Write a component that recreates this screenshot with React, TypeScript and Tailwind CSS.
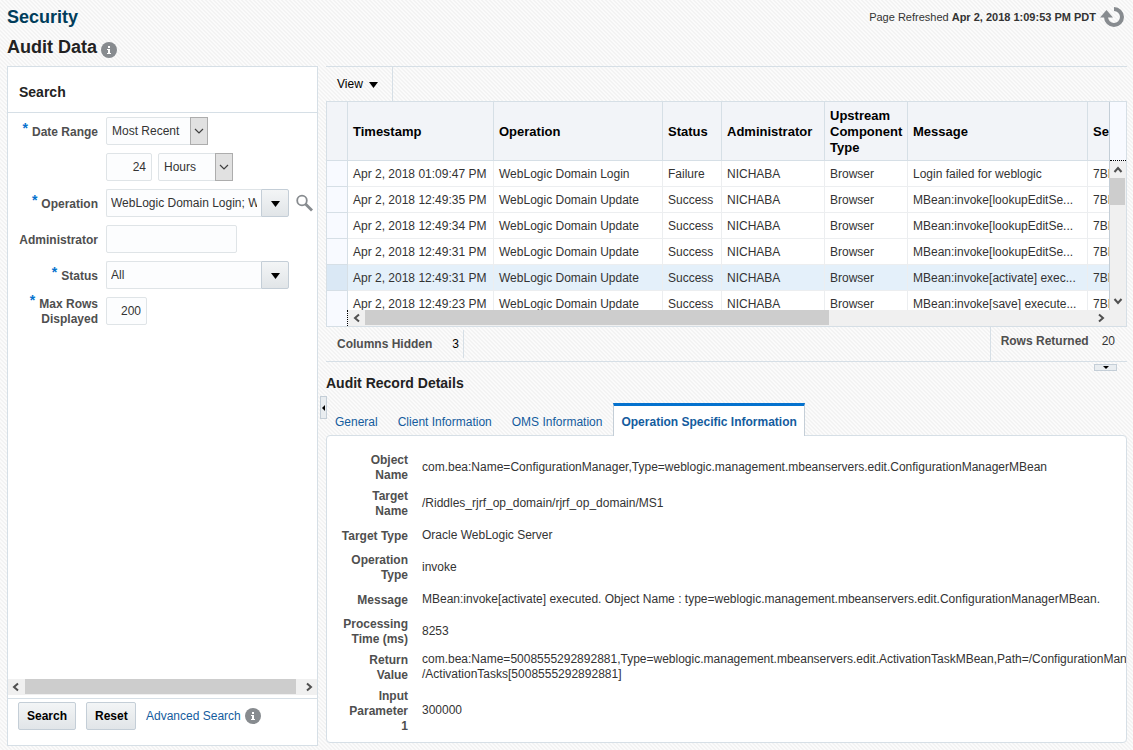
import React, { useState } from 'react';

const auditRows = [
  { time: 'Apr 2, 2018 01:09:47 PM', operation: 'WebLogic Domain Login', status: 'Failure', message: 'Login failed for weblogic' },
  { time: 'Apr 2, 2018 12:49:35 PM', operation: 'WebLogic Domain Update', status: 'Success', message: 'MBean:invoke[lookupEditSe...' },
  { time: 'Apr 2, 2018 12:49:34 PM', operation: 'WebLogic Domain Update', status: 'Success', message: 'MBean:invoke[lookupEditSe...' },
  { time: 'Apr 2, 2018 12:49:31 PM', operation: 'WebLogic Domain Update', status: 'Success', message: 'MBean:invoke[lookupEditSe...' },
  { time: 'Apr 2, 2018 12:49:31 PM', operation: 'WebLogic Domain Update', status: 'Success', message: 'MBean:invoke[activate] exec...' },
  { time: 'Apr 2, 2018 12:49:23 PM', operation: 'WebLogic Domain Update', status: 'Success', message: 'MBean:invoke[save] execute...' },
];

const columns = ['Timestamp', 'Operation', 'Status', 'Administrator', 'Upstream Component Type', 'Message', 'Session'];

const tabs = ['General', 'Client Information', 'OMS Information', 'Operation Specific Information'];

const details = [
  ['Object Name', 'com.bea:Name=ConfigurationManager,Type=weblogic.management.mbeanservers.edit.ConfigurationManagerMBean'],
  ['Target Name', '/Riddles_rjrf_op_domain/rjrf_op_domain/MS1'],
  ['Target Type', 'Oracle WebLogic Server'],
  ['Operation Type', 'invoke'],
  ['Message', 'MBean:invoke[activate] executed. Object Name : type=weblogic.management.mbeanservers.edit.ConfigurationManagerMBean.'],
  ['Processing Time (ms)', '8253'],
  ['Return Value', 'com.bea:Name=5008555292892881,Type=weblogic.management.mbeanservers.edit.ActivationTaskMBean,Path=/ConfigurationManager\n/ActivationTasks[5008555292892881]'],
  ['Input Parameter 1', '300000'],
];

const InfoIcon = () => (
  <svg width="16" height="16" viewBox="0 0 16 16" aria-hidden="true">
    <circle cx="8" cy="8" r="8" fill="#878b8f" />
    <path d="M7 4h2v2H7zM6 7h3v4h1v1H6v-1h1V8H6z" fill="#fff" />
  </svg>
);

const RefreshIcon = () => (
  <svg width="24" height="22" viewBox="0 0 24 22" aria-hidden="true">
    <path d="M14 3a8 8 0 1 1-8 8" fill="none" stroke="#878b8f" strokeWidth="4" />
    <path d="M0 11.5L6.5 4l6.5 7.5z" fill="#878b8f" />
  </svg>
);

const SearchIcon = () => (
  <svg width="18" height="18" viewBox="0 0 18 18" fill="none" aria-hidden="true">
    <circle cx="6" cy="6.5" r="4.8" stroke="#878b8f" strokeWidth="1.8" />
    <path d="M9.5 10l6.5 6.5" stroke="#878b8f" strokeWidth="2.8" />
  </svg>
);

const Chevron = ({ d }: { d: string }) => (
  <svg width="10" height="10" viewBox="0 0 10 10" fill="none" className="shrink-0" aria-hidden="true">
    <path d={d} stroke="#505050" strokeWidth="2" />
  </svg>
);

const LEFT = 'M7 1.5L3 5l4 3.5';
const RIGHT = 'M3 1.5L7 5 3 8.5';
const UP = 'M1.5 7L5 3l3.5 4';
const DOWN = 'M1.5 3L5 7l3.5-4';

const Triangle = () => (
  <svg width="9" height="6" viewBox="0 0 9 6" className="mt-0.5" aria-hidden="true">
    <path d="M0 0h9L4.5 6z" fill="#000" />
  </svg>
);

const Label = ({ id, required, children }: { id: string; required?: boolean; children: React.ReactNode }) => (
  <label htmlFor={id} className="-my-1 flex justify-end pt-0.5 text-right font-bold whitespace-nowrap text-[#4f4f4f]">
    {required && <span className="-mt-1 mr-1 text-sm leading-[15px] text-[#0572ce]">*</span>}
    <span>{children}</span>
  </label>
);

const field = 'h-7 rounded-xs border border-[#dfe4e7] bg-[#fcfdfe] text-[#333]';

const NativeSelect = ({ id, label, options, width }: { id: string; label?: string; options: string[]; width: string }) => (
  <div className={`relative ${width}`}>
    <select id={id} aria-label={label} className={`${field} w-full appearance-none pl-[5px]`}>
      {options.map((o) => <option key={o}>{o}</option>)}
    </select>
    <span className="pointer-events-none absolute inset-y-0 right-0 flex w-[18px] items-center justify-center border border-[#adadad] bg-[#e1e1e1]">
      <svg width="10" height="6" viewBox="0 0 10 6" fill="none" aria-hidden="true">
        <path d="M1 1l4 4 4-4" stroke="#404040" strokeWidth="1.2" />
      </svg>
    </span>
  </div>
);

const Combo = ({ id, value }: { id: string; value: string }) => (
  <div className="flex w-[183px]">
    <div className="flex h-7 min-w-0 flex-1 rounded-l-xs border border-r-0 border-[#dfe4e7] bg-[#fcfdfe] px-1">
      <input id={id} defaultValue={value} className="w-full min-w-0 text-[#333] outline-none" />
    </div>
    <button type="button" aria-label="Show choices" className="flex h-7 w-7 items-center justify-center rounded-r-xs border border-[#c4ced7] bg-linear-to-b from-[#f3f5f6] to-[#e1e5e8]">
      <Triangle />
    </button>
  </div>
);

const button = 'h-7 rounded-xs border border-[#c4ced7] bg-linear-to-b from-[#f3f5f6] to-[#e1e5e8] px-2 font-bold text-black';

const SearchPanel = () => (
  <form className="flex w-[311px] shrink-0 flex-col border border-[#d6dfe6] bg-white" onSubmit={(e) => e.preventDefault()}>
    <h2 className="border-b border-[#d6dfe6] px-[11px] pt-[15px] pb-[9px] text-sm leading-[21px] font-bold text-[#222]">Search</h2>

    <div className="grid grid-cols-[90px_1fr] items-center gap-2 pt-1">
      <Label id="range" required>Date Range</Label>
      <NativeSelect id="range" options={['Most Recent', 'Time Interval']} width="w-[102px]" />

      <div className="col-start-2 flex gap-[6px]">
        <input aria-label="Amount" defaultValue="24" className={`${field} w-[46px] pr-[5px] text-right`} />
        <NativeSelect id="unit" label="Unit" options={['Hours', 'Days']} width="w-[75px]" />
      </div>

      <Label id="operation" required>Operation</Label>
      <div className="flex items-center gap-[7px]">
        <Combo id="operation" value="WebLogic Domain Login; WebLogic Domain Update" />
        <button type="button" aria-label="Select operations"><SearchIcon /></button>
      </div>

      <Label id="admin">Administrator</Label>
      <input id="admin" className={`${field} w-[131px] px-1`} />

      <Label id="status" required>Status</Label>
      <Combo id="status" value="All" />

      <Label id="rows" required>Max Rows<br />Displayed</Label>
      <input id="rows" defaultValue="200" className={`${field} w-[41px] pr-[5px] text-right`} />
    </div>

    <div className="mt-auto flex h-4 items-center justify-between gap-1 bg-[#f0f0f0] px-[3px]">
      <Chevron d={LEFT} />
      <div className="mr-1 h-[15px] flex-1 self-start bg-[#cdcdcd]" />
      <Chevron d={RIGHT} />
    </div>

    <div className="mt-[3px] flex items-start border-t border-[#d6dfe6] px-[10px] pt-[3px] pb-[15px]">
      <button type="submit" className={`${button} mr-[10px] w-[58px]`}>Search</button>
      <button type="reset" className={`${button} mr-[10px] w-[50px]`}>Reset</button>
      <a href="#advanced" className="mr-1 leading-7 text-[#145c9e]">Advanced Search</a>
      <button type="button" aria-label="About advanced search" className="mt-[6px]"><InfoIcon /></button>
    </div>
  </form>
);

const AuditTable = () => {
  const [selected, setSelected] = useState(4);

  return (
    <div className="border border-[#d6dfe6] bg-white">
      <div className="flex h-[208px]">
        <div className="min-w-0 flex-1 overflow-hidden">
          <table className="w-[861px] table-fixed border-separate border-spacing-0 text-left">
            <colgroup>
              <col className="w-[21px]" />
              <col className="w-[146px]" />
              <col className="w-[169px]" />
              <col className="w-[59px]" />
              <col className="w-[103px]" />
              <col className="w-[83px]" />
              <col className="w-[180px]" />
              <col className="w-[100px]" />
            </colgroup>
            <thead>
              <tr className="h-[59px] bg-[#f2f4f8]">
                <td className="border-r border-b border-[#d6dfe6]" />
                {columns.map((c) => (
                  <th key={c} className="border-r border-b border-[#d6dfe6] pt-0.5 pl-[5px] text-[13px] leading-4 font-bold text-black">{c}</th>
                ))}
              </tr>
            </thead>
            <tbody>
              {auditRows.map((r, i) => (
                <tr key={i} onClick={() => setSelected(i)} className={i === selected ? 'h-[26px] bg-[#e4f0fa]' : 'h-[26px]'}>
                  <td className={`border-r border-b border-[#d6dfe6] ${i === selected ? 'bg-[#dae8f5]' : 'bg-[#f8faff]'}`} />
                  {[r.time, r.operation, r.status, 'NICHABA', 'Browser', r.message, '7BE04C'].map((cell, j) => (
                    <td key={j} className="border-r border-b border-[#eceef0] pt-0.5 pl-[5px] whitespace-nowrap">{cell}</td>
                  ))}
                </tr>
              ))}
            </tbody>
          </table>
        </div>
        <div className="flex w-[17px] flex-col border-l border-[#c4ced7] bg-[#f8faff]">
          <div className="h-[59px] border-b border-dotted border-black" />
          <div className="flex flex-1 flex-col items-center justify-between bg-[#f0f0f0] pt-1 pb-1">
            <Chevron d={UP} />
            <div className="mt-[3px] mb-auto h-[27px] w-[15px] self-start bg-[#cdcdcd]" />
            <Chevron d={DOWN} />
          </div>
        </div>
      </div>
      <div className="flex h-4 bg-[#f8faff]">
        <div className="w-[21px] border-r border-dotted border-black" />
        <div className="flex flex-1 items-center bg-[#f0f0f0] pl-1">
          <Chevron d={LEFT} />
          <div className="ml-[3px] h-[15px] w-3/5 self-start bg-[#cdcdcd]" />
          <div className="ml-auto pr-5"><Chevron d={RIGHT} /></div>
        </div>
      </div>
    </div>
  );
};

const AuditDetails = () => {
  const [active, setActive] = useState(3);

  return (
    <section className="pt-0.5">
      <h2 className="text-sm leading-5 font-bold text-[#222]">Audit Record Details</h2>
      <div role="tablist" className="mt-[10px] flex gap-0.5">
        {tabs.map((t, i) => (
          <button
            key={t}
            role="tab"
            aria-selected={i === active}
            onClick={() => setActive(i)}
            className={
              i === active
                ? 'relative -mb-px h-[33px] border-x border-t-3 border-x-[#c4ced7] border-t-[#0572ce] bg-white px-[7px] pt-0.5 font-bold text-[#145c9e]'
                : 'h-8 px-[9px] pt-[7px] text-[#145c9e]'
            }
          >
            {t}
          </button>
        ))}
      </div>
      <div className="overflow-hidden rounded-sm border border-[#d6dfe6] bg-white pt-[13px] pb-[6px] pl-[13px]">
        <table>
          <tbody>
            {details.map(([name, value]) => (
              <tr key={name} className="h-7">
                <th className="w-[68px] min-w-[68px] pt-1 pb-0.5 text-right font-bold text-[#4f4f4f]">{name}</th>
                <td className="pl-[14px] whitespace-pre">{value}</td>
              </tr>
            ))}
          </tbody>
        </table>
      </div>
    </section>
  );
};

export default function App() {
  return (
    <div className="flex min-h-screen flex-col bg-[#f9f9f9] bg-[linear-gradient(45deg,#f3f3f3_25%,#fbfbfb_25%,#fbfbfb_50%,#f3f3f3_50%,#f3f3f3_75%,#fbfbfb_75%)] bg-size-[4px_4px] pr-[6px] pb-1 pl-[7px] font-['Liberation_Sans',Arial,sans-serif] text-xs leading-[15px] text-[#333]">
      <header className="flex items-start justify-between pt-[6px]">
        <div className="text-lg font-bold">
          <h1 className="leading-[22px] text-[#003d5b]">Security</h1>
          <div className="mt-2 flex items-center gap-1 text-[#222]">
            <h2 className="leading-[22px]">Audit Data</h2>
            <button aria-label="About audit data" className="mt-[6px]"><InfoIcon /></button>
          </div>
        </div>
        <div className="flex items-center gap-1 pr-[3px] text-[11px]">
          <p>Page Refreshed <b>Apr 2, 2018 1:09:53 PM PDT</b></p>
          <button aria-label="Refresh page"><RefreshIcon /></button>
        </div>
      </header>

      <div className="mt-2 flex flex-1">
        <SearchPanel />

        <div className="flex w-2 shrink-0 items-start">
          <button aria-label="Collapse search" className="mt-[330px] ml-[2px] flex h-[23px] w-[7px] shrink-0 items-center justify-center border border-[#c4ced7] bg-[#e9edf0]">
            <svg width="3" height="6" viewBox="0 0 3 6" aria-hidden="true"><path d="M3 0v6L0 3z" fill="#000" /></svg>
          </button>
        </div>

        <main className="min-w-0 flex-1">
          <div className="border-t border-[#d6dfe6]">
            <button className="flex h-[34px] items-center gap-[6px] border-r border-[#d6dfe6] pr-[14px] pl-[11px] text-black">
              View <Triangle />
            </button>
          </div>
          <AuditTable />
          <div className="flex h-[35px] justify-between border-b border-[#d6dfe6]">
            <div className="my-[3px] flex items-center border-r border-[#d6dfe6] pr-1 pl-[11px]">
              <b className="mr-5 text-[#4f4f4f]">Columns Hidden</b>
              <span className="text-black">3</span>
            </div>
            <div className="flex items-start border-l border-[#d6dfe6] pt-[7px] pr-3 pl-[10px]">
              <b className="mr-[13px] text-[#4f4f4f]">Rows Returned</b>
              <span>20</span>
            </div>
          </div>
          <div className="flex justify-end pt-[2px] pr-[10px]">
            <button aria-label="Collapse details" className="flex h-[7px] w-[23px] items-center justify-center border border-[#c4ced7] bg-[#e9edf0]">
              <svg width="6" height="3" viewBox="0 0 6 3" aria-hidden="true"><path d="M0 0h6L3 3z" fill="#000" /></svg>
            </button>
          </div>
          <AuditDetails />
        </main>
      </div>
    </div>
  );
}
